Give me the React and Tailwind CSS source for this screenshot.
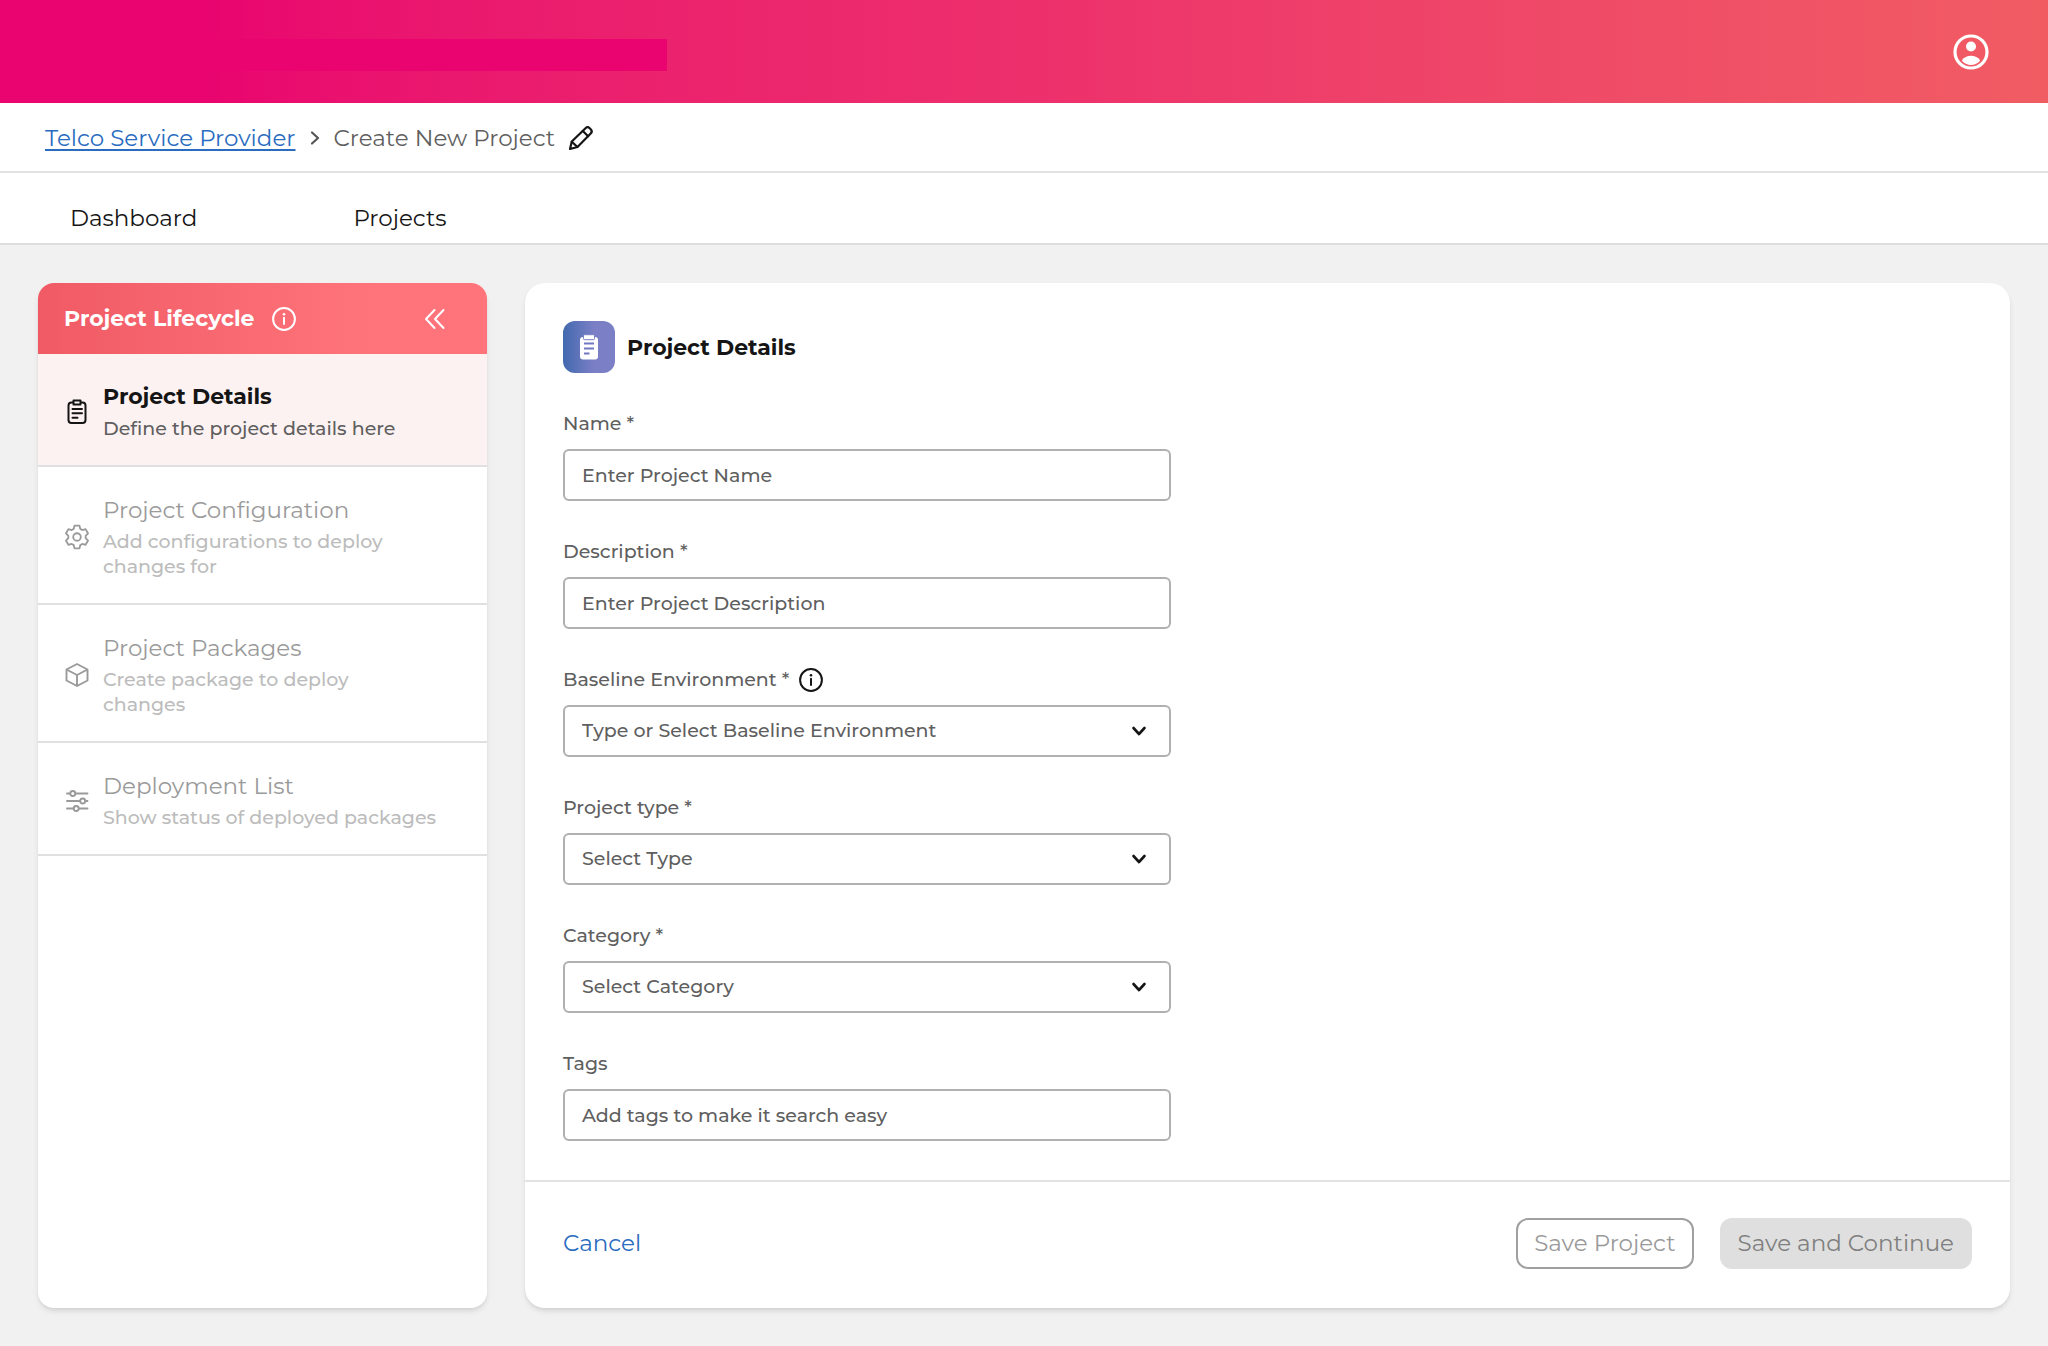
import { useState } from "react";

const ClipboardIcon = ({ className }) => (
  <svg className={className} viewBox="0 0 26 26" fill="none" stroke="currentColor" strokeWidth="2" strokeLinecap="round" strokeLinejoin="round" aria-hidden="true">
    <path d="M9 3.500H7.500a3 3 0 0 0-3 3V21a3 3 0 0 0 3 3h11a3 3 0 0 0 3-3V6.500a3 3 0 0 0-3-3H17" />
    <path d="M9.500 1.500h7v4h-7z" />
    <path d="M8.500 10h9.500M8.500 14.300h9.500M8.500 18.800h5" />
  </svg>
);

const GearIcon = ({ className }) => (
  <svg className={className} viewBox="0 0 24 24" fill="none" stroke="currentColor" strokeWidth="1.700" strokeLinecap="round" strokeLinejoin="round" aria-hidden="true">
    <path d="M9.700 1.500h4.600l.7 3 1.900 1.100 3-.9 2.300 4-2.200 2.200v2.200l2.200 2.200-2.300 4-3-.9-1.900 1.100-.7 3H9.700l-.7-3-1.900-1.100-3 .9-2.300-4L4 13.100v-2.200L1.800 8.700l2.300-4 3 .9L9 4.500z" />
    <circle cx="12" cy="12" r="3.500" />
  </svg>
);

const BoxIcon = ({ className }) => (
  <svg className={className} viewBox="0 0 26 26" fill="none" stroke="currentColor" strokeWidth="1.900" strokeLinejoin="round" aria-hidden="true">
    <path d="M13 2 23.500 7.500v11L13 24 2.500 18.500v-11z" />
    <path d="M2.500 7.500 13 13l10.500-5.500M13 13v11" />
  </svg>
);

const SlidersIcon = ({ className }) => (
  <svg className={className} viewBox="0 0 26 26" fill="none" stroke="currentColor" strokeWidth="1.900" strokeLinecap="round" aria-hidden="true">
    <path d="M3 5.500h3M11.500 5.500h12M3 13h13M21.500 13h2M3 20.500h6.500M15 20.500h8.500" />
    <circle cx="8.800" cy="5.500" r="2.500" />
    <circle cx="18.700" cy="13" r="2.500" />
    <circle cx="12.200" cy="20.500" r="2.500" />
  </svg>
);

const InfoIcon = ({ className }) => (
  <svg className={className} viewBox="0 0 24 24" fill="none" stroke="currentColor" strokeWidth="2" strokeLinecap="round" aria-hidden="true">
    <circle cx="12" cy="12" r="10.900" />
    <path d="M12 10.800V17" />
    <circle cx="12" cy="7.200" r="1.300" fill="currentColor" stroke="none" />
  </svg>
);

const steps = [
  { title: "Project Details", text: "Define the project details here", Icon: ClipboardIcon },
  { title: "Project Configuration", text: "Add configurations to deploy\nchanges for", Icon: GearIcon },
  { title: "Project Packages", text: "Create package to deploy\nchanges", Icon: BoxIcon },
  { title: "Deployment List", text: "Show status of deployed packages", Icon: SlidersIcon },
];

const fields = [
  { id: "name", label: "Name *", placeholder: "Enter Project Name" },
  { id: "description", label: "Description *", placeholder: "Enter Project Description" },
  { id: "baseline", label: "Baseline Environment *", placeholder: "Type or Select Baseline Environment", select: true, info: true },
  { id: "type", label: "Project type *", placeholder: "Select Type", select: true },
  { id: "category", label: "Category *", placeholder: "Select Category", select: true },
  { id: "tags", label: "Tags", placeholder: "Add tags to make it search easy" },
];

const Header = () => (
  <header className="flex h-[103px] items-center justify-between bg-linear-to-r from-[#e9046f] from-10% via-[#ed2f6c] via-50% to-[#f15c63] pr-[59px]">
    <div className="mt-1.5 h-8 w-[667px] bg-[#e9046f]" />
    <button aria-label="Account">
      <svg className="size-9" viewBox="0 0 36 36" aria-hidden="true">
        <circle cx="18" cy="18" r="16" fill="none" stroke="white" strokeWidth="3.200" />
        <circle cx="18" cy="12.500" r="5" fill="white" />
        <path d="M8.800 26.500C11 23.300 14.200 21.800 18 21.800s7 1.500 9.200 4.700C25 29.400 21.700 31 18 31s-7-1.600-9.200-4.500z" fill="white" />
      </svg>
    </button>
  </header>
);

const Breadcrumb = () => (
  <div className="flex h-[70px] items-center border-b-2 border-[#e2e2e2] bg-white px-[45px] pt-0.5 text-[23px]">
    <a href="#" className="text-[#2a6cc0] underline decoration-2 underline-offset-[3px]">Telco Service Provider</a>
    <svg className="mx-3.5 h-4 w-2.5" viewBox="0 0 10 16" fill="none" stroke="#555" strokeWidth="2.200" strokeLinecap="round" strokeLinejoin="round" aria-hidden="true">
      <path d="M2 2.500 8 8l-6 5.500" />
    </svg>
    <span className="text-[#5f5f5f]">Create New Project</span>
    <button aria-label="Rename project" className="ml-3">
      <svg className="size-7" viewBox="0 0 28 28" fill="none" stroke="#151515" strokeWidth="2.200" strokeLinejoin="round" strokeLinecap="round" aria-hidden="true">
        <path d="M3 25l1.800-7.500L18.500 4.200c1.300-1.300 3-1.200 4.200 0l1 1c1.300 1.300 1.300 3 0 4.300L10.500 23z" />
        <path d="M15.800 7l5.300 5.200M4.800 17.800l5.400 5" />
      </svg>
    </button>
  </div>
);

const Sidebar = () => (
  <aside className="flex w-[449px] shrink-0 flex-col overflow-hidden rounded-2xl bg-white shadow-md">
    <div className="flex h-[71px] items-center bg-linear-to-r from-[#f05a65] to-[#ff747b] to-75% pr-10 pl-[26px] text-white">
      <h2 className="text-[22px] font-bold">Project Lifecycle</h2>
      <button aria-label="About the project lifecycle" className="ml-[18px]">
        <InfoIcon className="size-6" />
      </button>
      <button aria-label="Collapse" className="ml-auto">
        <svg className="size-6" viewBox="0 0 24 24" fill="none" stroke="currentColor" strokeWidth="2" strokeLinecap="round" strokeLinejoin="round" aria-hidden="true">
          <path d="M11.500 3 3 12l8.500 9M20.500 3 12 12l8.500 9" />
        </svg>
      </button>
    </div>
    {steps.map(({ title, text, Icon }, index) => {
      const active = index === 0;
      return (
        <div
          key={title}
          className={`flex items-center gap-[13px] border-b-2 border-[#e0e0e0] pt-7 pr-10 pb-6 pl-[26px] ${active ? "bg-[#fdf2f2] text-[#151515]" : "text-[#9a9a9a]"}`}
        >
          <Icon className="size-[26px] shrink-0" />
          <div>
            <h3 className={`leading-[30px] ${active ? "text-[22px] font-bold" : "text-[23px]"}`}>{title}</h3>
            <p className={`mt-1 text-[19px] leading-[25px] font-medium whitespace-pre-line ${active ? "text-[#5f5f5f]" : "text-[#bcbcbc]"}`}>{text}</p>
          </div>
        </div>
      );
    })}
  </aside>
);

const Field = ({ field, value, onChange }) => (
  <div>
    <div className="flex h-[26px] items-center gap-2.5 text-[#5f5f5f]">
      <label htmlFor={field.id} className="text-[19px] leading-[26px] font-medium">{field.label}</label>
      {field.info && (
        <button type="button" aria-label="About the baseline environment" className="text-[#151515]">
          <InfoIcon className="size-6" />
        </button>
      )}
    </div>
    {field.select ? (
      <div className="relative mt-3">
        <select
          id={field.id}
          value={value}
          onChange={onChange}
          className="h-[52px] w-full appearance-none rounded-md border-2 border-[#b0b0b0] bg-white px-[17px] text-[19px] font-medium text-[#5f5f5f]"
        >
          <option value="">{field.placeholder}</option>
        </select>
        <svg className="pointer-events-none absolute top-5 right-6 h-3 w-4" viewBox="0 0 16 12" fill="none" stroke="#151515" strokeWidth="2.600" strokeLinecap="round" strokeLinejoin="round" aria-hidden="true">
          <path d="M2.500 3 8 9l5.500-6" />
        </svg>
      </div>
    ) : (
      <input
        id={field.id}
        type="text"
        value={value}
        onChange={onChange}
        placeholder={field.placeholder}
        className="mt-3 h-[52px] w-full rounded-md border-2 border-[#b0b0b0] bg-white px-[17px] text-[19px] font-medium placeholder:text-[#5f5f5f]"
      />
    )}
  </div>
);

const ProjectForm = () => {
  const [values, setValues] = useState({});

  return (
    <form className="flex flex-1 flex-col rounded-[20px] bg-white shadow-md">
      <div className="flex-1 p-[38px]">
        <div className="mb-[38px] flex items-center gap-3">
          <div className="flex size-[52px] items-center justify-center rounded-xl bg-linear-to-r from-[#4169ae] to-[#7b7fc6] to-60%">
            <svg className="h-[26px] w-5" viewBox="0 0 20 26" aria-hidden="true">
              <rect x="1" y="3" width="18" height="22.500" rx="3" fill="white" />
              <rect x="4.500" y=".7" width="11" height="5" rx="1" fill="white" stroke="#7b7fc6" strokeWidth="1" />
              <path d="M5 9.500h10M5 14.500h10M5 19.500h5.500" stroke="#6f78c0" strokeWidth="1.900" />
            </svg>
          </div>
          <h1 className="text-[22px] font-bold text-[#151515]">Project Details</h1>
        </div>
        <div className="flex max-w-[608px] flex-col gap-[38px]">
          {fields.map((field) => (
            <Field
              key={field.id}
              field={field}
              value={values[field.id] || ""}
              onChange={(e) => setValues({ ...values, [field.id]: e.target.value })}
            />
          ))}
        </div>
      </div>

      {/* Form actions */}
      <div className="flex items-center gap-[26px] border-t-2 border-[#e2e2e2] px-[38px] pt-9 pb-[39px] text-[23px]">
        <button type="button" className="mr-auto text-[#2a6cc0]">Cancel</button>
        <button type="button" className="h-[51px] rounded-xl border-2 border-[#a0a0a0] px-4 text-[#9a9a9a]">Save Project</button>
        <button type="submit" disabled className="h-[51px] rounded-xl bg-[#dfdfdf] px-[18px] text-[#808080]">Save and Continue</button>
      </div>
    </form>
  );
};

const App = () => (
  <div className="flex min-h-screen flex-col bg-[#f1f1f1] font-['Montserrat','Inter',sans-serif]">
    <Header />
    <Breadcrumb />
    <nav className="flex h-[72px] gap-[156px] border-b-2 border-[#dedede] bg-white px-[70px] pt-7 text-[23px] text-[#151515]">
      <a href="#">Dashboard</a>
      <a href="#">Projects</a>
    </nav>
    <main className="flex flex-1 gap-[38px] p-[38px]">
      <Sidebar />
      <ProjectForm />
    </main>
  </div>
);

export default App;
